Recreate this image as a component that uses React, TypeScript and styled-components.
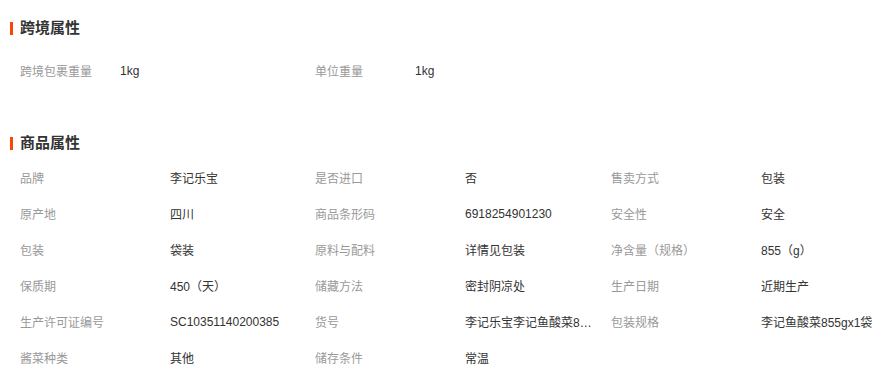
import React from "react";
import styled, { createGlobalStyle } from "styled-components";

const Global = createGlobalStyle`
  html, body { margin: 0; padding: 0; background: #fff; }
  body {
    font-family: "Liberation Sans", "Noto Sans CJK SC", sans-serif;
    font-size: 12px;
    color: #333;
  }
`;

const Page = styled.div`
  padding: 0 10px;
  width: 891px;
  box-sizing: border-box;
`;

const Section = styled.section<{ $top: number; $gap: number }>`
  padding-top: ${(p) => p.$top}px;
  & > div:last-child { margin-top: ${(p) => p.$gap}px; }
`;

const Title = styled.h3`
  position: relative;
  margin: 0;
  padding-left: 10px;
  height: 20px;
  line-height: 20px;
  font-size: 15px;
  font-weight: bold;
  color: #333;
  &::before {
    content: "";
    position: absolute;
    left: 0;
    top: 4px;
    width: 3px;
    height: 13px;
    background: #ff4400;
  }
`;

const Grid = styled.div`
  display: grid;
  grid-template-columns: 295px 296px 296px;
`;

const Cell = styled.div`
  display: flex;
  align-items: center;
  height: 36px;
  padding-left: 10px;
  padding-bottom: 1px;
  box-sizing: border-box;
`;

const Label = styled.span<{ $w: number }>`
  flex: 0 0 ${(p) => p.$w}px;
  color: #999;
  white-space: nowrap;
`;

const Value = styled.span`
  flex: 0 0 auto;
  max-width: 131px;
  color: #333;
  white-space: nowrap;
  overflow: hidden;
  text-overflow: ellipsis;
`;

type Item = [string, string];

const cross: Item[] = [
  ["跨境包裹重量", "1kg"],
  ["单位重量", "1kg"],
];

const goods: Item[] = [
  ["品牌", "李记乐宝"],
  ["是否进口", "否"],
  ["售卖方式", "包装"],
  ["原产地", "四川"],
  ["商品条形码", "6918254901230"],
  ["安全性", "安全"],
  ["包装", "袋装"],
  ["原料与配料", "详情见包装"],
  ["净含量（规格）", "855（g）"],
  ["保质期", "450（天）"],
  ["储藏方法", "密封阴凉处"],
  ["生产日期", "近期生产"],
  ["生产许可证编号", "SC10351140200385"],
  ["货号", "李记乐宝李记鱼酸菜855gx1袋"],
  ["包装规格", "李记鱼酸菜855gx1袋"],
  ["酱菜种类", "其他"],
  ["储存条件", "常温"],
];

const Attrs = ({ items, labelWidth }: { items: Item[]; labelWidth: number }) => (
  <Grid>
    {items.map(([k, v]) => (
      <Cell key={k}>
        <Label $w={labelWidth}>{k}</Label>
        <Value>{v}</Value>
      </Cell>
    ))}
  </Grid>
);

export default function App() {
  return (
    <Page>
      <Global />
      <Section $top={18} $gap={15}>
        <Title>跨境属性</Title>
        <Attrs items={cross} labelWidth={100} />
      </Section>
      <Section $top={44} $gap={7}>
        <Title>商品属性</Title>
        <Attrs items={goods} labelWidth={150} />
      </Section>
    </Page>
  );
}
